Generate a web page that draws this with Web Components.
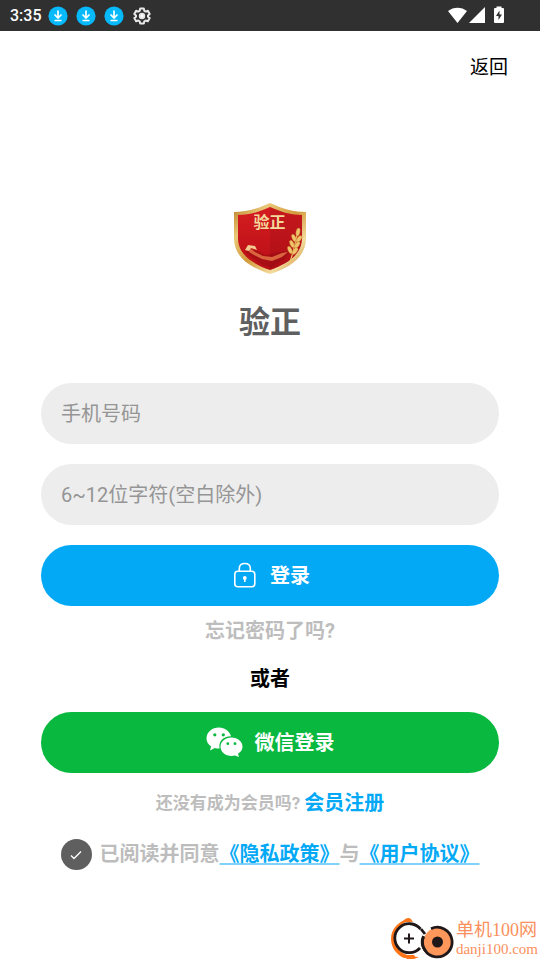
<!DOCTYPE html>
<html lang="zh-CN">
<head>
<meta charset="utf-8">
<meta name="viewport" content="width=device-width, initial-scale=1">
<title>验正</title>
<style>
  body {
    margin: 0;
    background: #fff;
    color: #000;
    font-family: Roboto, "Noto Sans CJK SC", sans-serif;
  }
</style>
</head>
<body>
<login-page></login-page>

<script>
class BaseElement extends HTMLElement
{
  constructor()
  {
    super();

    this.attachShadow({mode: "open"});
  }

  connectedCallback()
  {
    this.render();
  }

  render()
  {
    // trimmed, so that inline elements get no stray spaces around them
    this.shadowRoot.innerHTML = `
      <style>
        * { box-sizing: border-box; }
        svg { display: block; flex: none; }
        ${this.styleCSS()}
      </style>${this.template()}
    `.trim();
  }

  styleCSS()
  {
    return "";
  }

  template()
  {
    return "<slot></slot>";
  }
}

class StatusBar extends BaseElement
{
  styleCSS()
  {
    //language=CSS
    return `
      :host {
        display: flex;
        align-items: center;
        gap: 6px;
        height: 31px;
        padding: 0 35px 0 10px;
        background: #303030;
        color: #fff;
        font-size: 16px;
        font-weight: 500;
      }
      div { display: flex; flex: 1; align-items: center; gap: 8px; }
    `;
  }

  template()
  {
    const download = `
      <svg width="20" height="20" viewBox="0 0 20 20">
        <circle cx="10" cy="10" r="9.6" fill="#06b9fb"/>
        <path d="M10 4.500v7M6.500 8.500l3.500 3.500 3.500-3.500M6.500 14.500h7" fill="none" stroke="#fff" stroke-width="1.700"/>
      </svg>`;

    //language=HTML
    return `
      <slot></slot>
      <div>
        ${download}${download}${download}
        <svg width="20" height="20" viewBox="0 0 20 20" fill="none" stroke="#e8e8e8" stroke-width="2" stroke-linejoin="round">
          <path d="M8.200 2.500h3.600l.5 2.300 1.400.8 2.200-.8 1.800 3.200-1.700 1.500v1.200l1.700 1.400-1.800 3.200-2.200-.8-1.400.8-.5 2.300H8.200l-.5-2.300-1.400-.8-2.200.8-1.800-3.200L4 10.700V9.500L2.300 8l1.800-3.200 2.200.8 1.400-.8z"/>
          <circle cx="10" cy="10" r="2.200" fill="#fff"/>
        </svg>
      </div>
      <svg width="57" height="20" viewBox="0 0 57 20" fill="#fff">
        <path d="M0 5C5.500 .500 13.500 .500 19 5L9.500 17z"/>
        <path d="M37 1V17H21z"/>
        <path d="M48.500 .500h5v1.500h1.500q1 0 1 1V16q0 1-1 1h-8q-1 0-1-1V3q0-1 1-1h1.500z"/>
        <path d="M51.500 4.500l-3.500 5.500h2.500v4l3.500-5.500h-2.500z" fill="#303030"/>
      </svg>
    `;
  }
}

class AppLogo extends BaseElement
{
  styleCSS()
  {
    //language=CSS
    return `
      :host { display: flex; flex-direction: column; align-items: center; gap: 25px; }
      h1 { margin: 0; color: #5f5f5f; font-size: 31px; line-height: 46px; font-weight: 700; }
    `;
  }

  template()
  {
    //language=HTML
    return `
      <svg width="74" height="72" viewBox="0 0 74 72" aria-hidden="true">
        <defs>
          <linearGradient id="gold" x1="0" y1="0" x2="1" y2="1">
            <stop offset="0" stop-color="#b97a20"/>
            <stop offset=".25" stop-color="#e9c878"/>
            <stop offset=".5" stop-color="#d39a3d"/>
            <stop offset=".75" stop-color="#f4dc9d"/>
            <stop offset="1" stop-color="#b87718"/>
          </linearGradient>
          <linearGradient id="red" x1="0" y1="0" x2="0" y2="1">
            <stop offset="0" stop-color="#d51d20"/>
            <stop offset="1" stop-color="#b90f16"/>
          </linearGradient>
        </defs>
        <path d="M37 0C50 6 61 9 73 9v26c0 18-14 29-36 36C15 64 1 53 1 35V9C13 9 24 6 37 0z" fill="url(#gold)"/>
        <path d="M37 4c11 5 21 8 32 8v23c0 15-12 25-32 32C17 60 5 50 5 35V12c11 0 21-3 32-8z" fill="url(#red)"/>
        <path d="M37 4c11 5 21 8 32 8v23c0 15-12 25-32 32z" fill="#860b12" opacity=".2"/>
        <path d="M12 49l10-2 10 5 16-3 9-1-6 8-13 9-10-4z" fill="#8d0b12" opacity=".45"/>
        <path d="M17 45l5 4 8 4 9 1 10-4 6-1-6 5-10 4-10-2-8-4-5-3z" fill="#d9653f"/>
        <path d="M12 47l3-5 7 1 2 4-6-2-2 3z" fill="#f3cb90"/>
        <text x="36.500" y="24.500" text-anchor="middle" font-size="16" font-weight="700" fill="#f4d79b">验正</text>
        <g fill="#efc46a" stroke="#bd6b24" stroke-width=".4">
          <path d="M57 59q4-12 7-27" fill="none" stroke="#efc46a" stroke-width="1.200"/>
          <ellipse cx="65" cy="29" rx="2" ry="4" transform="rotate(12 65 29)"/>
          <ellipse cx="61" cy="35" rx="2" ry="4" transform="rotate(-24 61 35)"/>
          <ellipse cx="66" cy="36" rx="2" ry="4" transform="rotate(38 66 36)"/>
          <ellipse cx="59" cy="41" rx="2" ry="4" transform="rotate(-24 59 41)"/>
          <ellipse cx="64" cy="42" rx="2" ry="4" transform="rotate(38 64 42)"/>
          <ellipse cx="57" cy="47" rx="2" ry="4" transform="rotate(-24 57 47)"/>
          <ellipse cx="62" cy="48" rx="2" ry="4" transform="rotate(38 62 48)"/>
        </g>
      </svg>
      <h1><slot></slot></h1>
    `;
  }
}

class TextField extends BaseElement
{
  styleCSS()
  {
    //language=CSS
    return `
      :host { display: block; }
      input {
        display: block;
        width: 100%;
        height: 61px;
        padding: 0 20px;
        border: 0;
        border-radius: 31px;
        outline: none;
        background: #ededed;
        color: #333;
        font: 400 20px Roboto, "Noto Sans CJK SC", sans-serif;
      }
      input::placeholder { color: #959595; opacity: 1; }
    `;
  }

  template()
  {
    const label = this.getAttribute("label");
    const type = this.getAttribute("type");

    return `<input type="${type}" aria-label="${label}" placeholder="${label}">`;
  }
}

class PillButton extends BaseElement
{
  styleCSS()
  {
    //language=CSS
    return `
      :host { display: block; --fill: #04a9f6; }
      :host([kind="wechat"]) { --fill: #09b83e; }
      button {
        display: flex;
        align-items: center;
        justify-content: center;
        gap: 12px;
        width: 100%;
        height: 61px;
        padding: 0 0 2px;
        border: 0;
        border-radius: 31px;
        background: var(--fill);
        color: #fff;
        font: 700 20px Roboto, "Noto Sans CJK SC", sans-serif;
        cursor: pointer;
      }
    `;
  }

  template()
  {
    return `
      <button type="button">
        ${this.getAttribute("kind") === "wechat" ? this.#wechatIcon() : this.#lockIcon()}
        <slot></slot>
      </button>
    `;
  }

  #lockIcon()
  {
    return `
      <svg width="28" height="26" viewBox="-3 0 28 26" fill="none" stroke="#fff" stroke-width="1.600">
        <rect x="1.800" y="9.300" width="20" height="15.500" rx="3"/>
        <path d="M6.300 9V6.500q0-5 5.500-5t5.500 5V9"/>
        <circle cx="11.800" cy="16" r="1.900" fill="#fff" stroke="none"/>
        <path d="M11.800 16v4"/>
      </svg>`;
  }

  #wechatIcon()
  {
    return `
      <svg width="37" height="30" viewBox="0 0 37 30" fill="#fff">
        <path d="M13 .5C6 .5.500 5.300.500 11.200c0 3.500 1.700 6.300 4.600 8.200L4 23.500l4.800-2.500c1.500.4 3 .6 4.800.5C12.200 14.300 17 9.500 25 9.200 23.600 4 18.800.5 13 .5z"/>
        <path d="M25.500 10.500c-6.100 0-11 4.100-11 9.200s4.900 9.200 11 9.200c1.200 0 2.400-.2 3.500-.5l4 1.500-1-3.200c2.800-1.700 4.500-4.200 4.500-7 0-5.100-4.900-9.200-11-9.200z"/>
        <g fill="#09b83e">
          <circle cx="8.800" cy="7.800" r="1.600"/>
          <circle cx="17.300" cy="7.800" r="1.600"/>
          <circle cx="21.800" cy="16.700" r="1.400"/>
          <circle cx="29" cy="16.700" r="1.400"/>
        </g>
      </svg>`;
  }
}

class TextLink extends BaseElement
{
  styleCSS()
  {
    //language=CSS
    return `
      :host { display: inline; }
      a { color: #04a9f6; font-weight: 700; text-decoration: none; }
      :host([muted]) a { color: #bdbdbd; }
      :host([plain]) a { color: #000; font-weight: 400; }
      :host([underlined]) a {
        text-decoration: underline #7fd3fa 2px;
        text-underline-offset: 2px;
        text-decoration-skip-ink: none;
      }
    `;
  }

  template()
  {
    return `<a href="${this.getAttribute("to")}"><slot></slot></a>`;
  }
}

class AgreementRow extends BaseElement
{
  styleCSS()
  {
    //language=CSS
    return `
      :host {
        display: flex;
        align-items: center;
        justify-content: center;
        gap: 8px;
        color: #bdbdbd;
        font-size: 20px;
        line-height: 31px;
        font-weight: 700;
      }
      .tick { display: grid; place-items: center; }
      .tick > * { grid-area: 1 / 1; }
      input {
        width: 31px;
        height: 31px;
        margin: 0;
        border-radius: 50%;
        background: #5f5f5f;
        appearance: none;
      }
      svg { pointer-events: none; visibility: hidden; }
      input:checked + svg { visibility: visible; }
    `;
  }

  template()
  {
    //language=HTML
    return `
      <span class="tick">
        <input type="checkbox" id="agree" checked>
        <svg width="12" height="10" viewBox="0 0 12 10" fill="none" stroke="#fff" stroke-width="1.300">
          <path d="M1 5.500l3 3L11 1.500"/>
        </svg>
      </span>
      <span><label for="agree"><slot name="label"></slot></label><slot></slot></span>
    `;
  }
}

class SiteMark extends BaseElement
{
  styleCSS()
  {
    //language=CSS
    return `
      :host {
        display: flex;
        align-items: center;
        align-self: flex-end;
        gap: 2px;
        padding-right: 2px;
        color: #fa905c;
        font-family: "Liberation Serif", "Noto Sans CJK SC", serif;
      }
      div { display: flex; flex-direction: column; }
      ::slotted([slot="name"]) { font-size: 18px; line-height: 20px; }
      ::slotted([slot="site"]) { font-size: 15px; line-height: 18px; }
    `;
  }

  template()
  {
    //language=HTML
    return `
      <svg width="64" height="43" viewBox="0 0 64 43" fill="none" aria-hidden="true">
        <path d="M20 1.500C8 4 1 12 1 22c0 9 6 16 13 19h12l-2-3h-7C9 35 4.500 29 4.500 22 4.500 14 9 8 16 5h4z" fill="#ff7417"/>
        <path d="M13 4q4-5 8-2l2 3zM14 39l15 1-5 2h-7z" fill="#ff7417"/>
        <path d="M30.500 12A14.500 14.500 0 1 0 30 31" stroke="#1f1718" stroke-width="2.800"/>
        <path d="M19 16.500v10M14 21.500h10" stroke="#1f1718" stroke-width="2"/>
        <circle cx="47.500" cy="25" r="14" fill="#ff965a"/>
        <path d="M41 11.700a14.800 14.800 0 1 1-7.500 8M31 12l4 5" stroke="#1f1718" stroke-width="2.800"/>
        <path d="M33.500 19a14.800 14.800 0 0 0 2 15" stroke="#1f1718" stroke-width="2.800"/>
        <circle cx="47.500" cy="25" r="5.500" fill="#1f1718"/>
      </svg>
      <div><slot name="name"></slot><slot name="site"></slot></div>
    `;
  }
}

class LoginPage extends BaseElement
{
  styleCSS()
  {
    //language=CSS
    return `
      :host { display: flex; flex-direction: column; min-height: 100vh; }
      nav { padding: 21px 32px 19px; text-align: right; font-size: 19px; line-height: 32px; }
      main { display: flex; flex-direction: column; padding: 100px 41px 20px; }
      form { display: flex; flex-direction: column; gap: 20px; padding-top: 37px; }
      p { margin: 0; text-align: center; font-size: 20px; line-height: 30px; }
      .forgot { padding-top: 10px; }
      .or { padding: 18px 0; font-weight: 700; }
      .register {
        display: flex;
        align-items: center;
        justify-content: center;
        gap: 4px;
        padding: 15px 0 21px;
      }
      small { color: #bdbdbd; font-size: 17px; font-weight: 700; }
      site-mark { margin-top: auto; }
    `;
  }

  template()
  {
    //language=HTML
    return `
      <status-bar>3:35</status-bar>
      <nav><text-link plain to="#back">返回</text-link></nav>
      <main>
        <app-logo>验正</app-logo>
        <form>
          <text-field type="tel" label="手机号码"></text-field>
          <text-field type="password" label="6~12位字符(空白除外)"></text-field>
          <pill-button>登录</pill-button>
        </form>
        <p class="forgot"><text-link muted to="#forgot">忘记密码了吗?</text-link></p>
        <p class="or">或者</p>
        <pill-button kind="wechat">微信登录</pill-button>
        <p class="register"><small>还没有成为会员吗?</small><text-link to="#register">会员注册</text-link></p>
        <agreement-row><span slot="label">已阅读并同意</span><text-link underlined to="#privacy">《隐私政策》</text-link>与<text-link underlined to="#terms">《用户协议》</text-link></agreement-row>
      </main>
      <site-mark>
        <span slot="name">单机100网</span>
        <span slot="site">danji100.com</span>
      </site-mark>
    `;
  }
}

customElements.define("status-bar", StatusBar);
customElements.define("app-logo", AppLogo);
customElements.define("text-field", TextField);
customElements.define("pill-button", PillButton);
customElements.define("text-link", TextLink);
customElements.define("agreement-row", AgreementRow);
customElements.define("site-mark", SiteMark);
customElements.define("login-page", LoginPage);
</script>
</body>
</html>
